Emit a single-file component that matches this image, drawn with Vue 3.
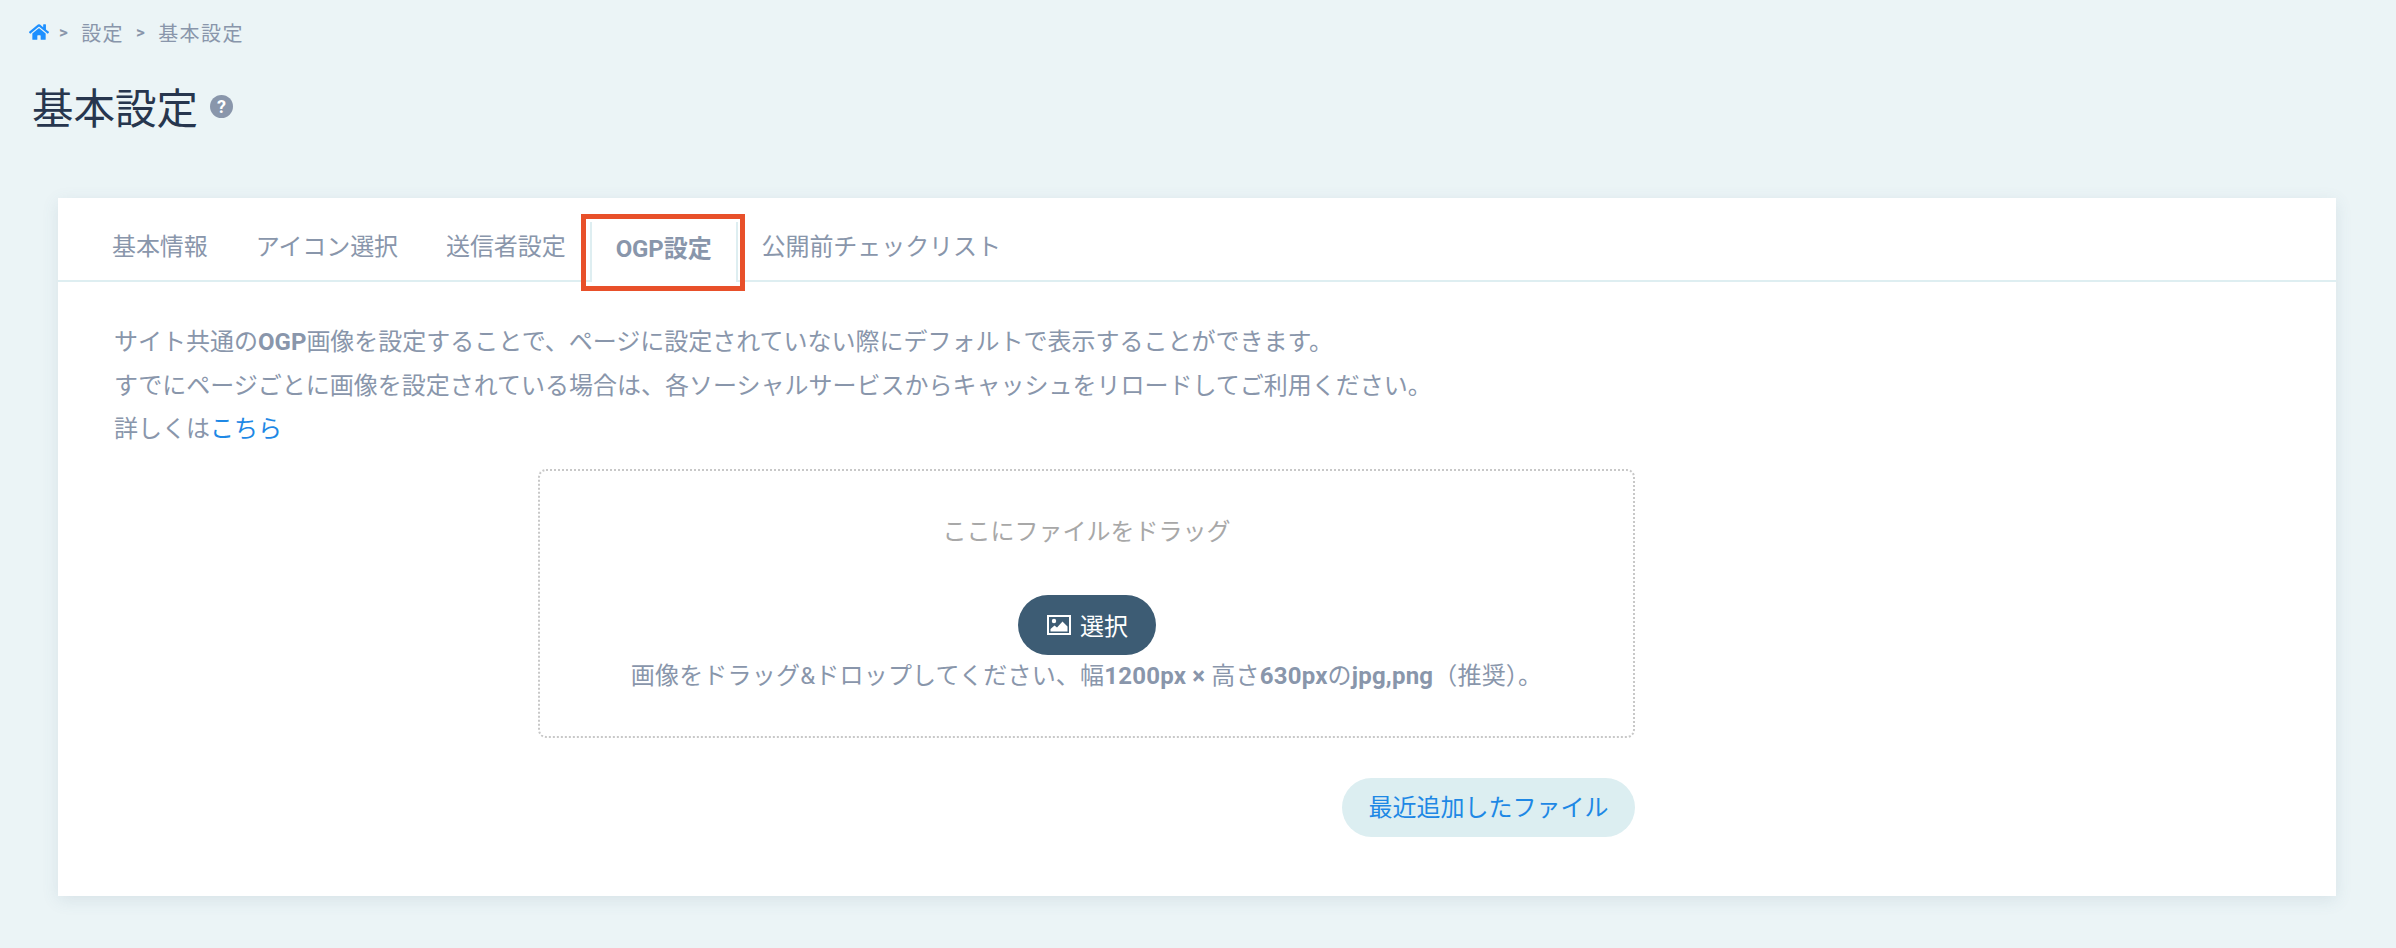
<template>
  <div class="page">
    <nav class="crumbs">
      <svg class="home" viewBox="0 0 576 512" width="20" height="18">
        <path fill="currentColor" d="M280.4 148.3L96 300.1V464a16 16 0 0 0 16 16l112-.3a16 16 0 0 0 15.9-16V368a16 16 0 0 1 16-16h64a16 16 0 0 1 16 16v95.6a16 16 0 0 0 16 16l112 .4a16 16 0 0 0 16-16V300L295.700 148.300a12.200 12.200 0 0 0-15.300 0zM571.600 251.500L488 182.600V44.100a12 12 0 0 0-12-12h-56a12 12 0 0 0-12 12v72.600L318.500 43a48 48 0 0 0-61 0L4.300 251.500a12 12 0 0 0-1.600 16.900l25.500 31a12 12 0 0 0 16.900 1.600l235.200-193.700a12.200 12.200 0 0 1 15.300 0L530.900 301a12 12 0 0 0 16.900-1.600l25.500-31a12 12 0 0 0-1.700-16.900z"/>
      </svg>
      <span class="sep">&gt;</span>
      <span class="crumb">設定</span>
      <span class="sep">&gt;</span>
      <span class="crumb">基本設定</span>
    </nav>

    <header class="head">
      <h1>基本設定</h1>
      <span class="help">?</span>
    </header>

    <section class="card">
      <ul class="tabs">
        <li v-for="tab in tabs" :key="tab" class="tab" :class="{ active: tab === activeTab }">{{ tab }}</li>
      </ul>
      <span class="marker"></span>

      <div class="body">
        <p class="lead">
          サイト共通の<b>OGP</b>画像を設定することで、ページに設定されていない際にデフォルトで表示することができます。<br>
          すでにページごとに画像を設定されている場合は、各ソーシャルサービスからキャッシュをリロードしてご利用ください。<br>
          詳しくは<a class="link">こちら</a>
        </p>

        <div class="upload">
          <div class="drop">
            <p class="drop-title">ここにファイルをドラッグ</p>
            <button class="pick">
              <svg viewBox="0 0 24 20" width="24" height="20">
                <rect x="1" y="1" width="22" height="18" fill="none" stroke="currentColor" stroke-width="2"/>
                <circle cx="7" cy="6" r="2.200" fill="currentColor"/>
                <path fill="currentColor" d="M3.500 16.500v-2.500l4-3.500 2.500 2 5.500-6 5 5v5z"/>
              </svg>
              <span>選択</span>
            </button>
            <p class="drop-note">画像をドラッグ&amp;ドロップしてください、幅<b>1200px × </b>高さ<b>630px</b>の<b>jpg,png</b>（推奨）。</p>
          </div>
          <div class="actions">
            <button class="recent">最近追加したファイル</button>
          </div>
        </div>
      </div>
    </section>
  </div>
</template>

<script setup>
const tabs = ['基本情報', 'アイコン選択', '送信者設定', 'OGP設定', '公開前チェックリスト']
const activeTab = 'OGP設定'
</script>

<style>
html, body {
  margin: 0;
  background: #ebf4f6;
}
</style>

<style scoped>
.page {
  height: 948px;
  box-sizing: border-box;
  padding: 20px 60px 0 0;
  background: #ebf4f6;
  font-family: Roboto, "Noto Sans CJK JP", sans-serif;
  color: #8996ab;
  overflow: hidden;
}
.crumbs {
  display: flex;
  align-items: center;
  height: 24px;
  padding-left: 29px;
  font-size: 20px;
  letter-spacing: 1.400px;
}
.home {
  color: #1e90ff;
  margin-right: 10px;
}
.sep {
  font-weight: 700;
  font-size: 17px;
  margin-right: 12px;
}
.crumb:nth-of-type(2) {
  margin-right: 12px;
}
.head {
  display: flex;
  align-items: center;
  gap: 12px;
  margin-top: 34px;
  padding-left: 32px;
  height: 56px;
}
h1 {
  margin: 0;
  font-size: 41.500px;
  font-weight: 400;
  color: #27364e;
}
.help {
  width: 23px;
  height: 23px;
  border-radius: 50%;
  background: #8996ab;
  color: #fff;
  font: 700 18px/23px Roboto, sans-serif;
  text-align: center;
}
.card {
  position: relative;
  margin: 64px 0 0 58px;
  height: 698px;
  background: #fff;
  box-shadow: 0 4px 16px rgba(70, 110, 130, 0.12);
}
.tabs {
  display: flex;
  height: 82px;
  margin: 0;
  padding: 0 0 0 30px;
  list-style: none;
  border-bottom: 2px solid #deeef1;
}
.tab {
  padding: 31px 24px 0;
  font-size: 24px;
  line-height: 36px;
  letter-spacing: -0.080px;
}
.active {
  height: 60px;
  box-sizing: border-box;
  margin: 24px 0 0 0;
  padding-top: 9px;
  background: #fff;
  font-weight: 700;
  border-left: 2px solid #deeef1;
  border-right: 2px solid #deeef1;
}
.marker {
  position: absolute;
  left: 523px;
  top: 16px;
  width: 164px;
  height: 77px;
  box-sizing: border-box;
  border: 5px solid #e8502a;
}
.body {
  padding: 39px 56px 0;
}
.lead {
  margin: 0;
  font-size: 24px;
  line-height: 43.500px;
}
.link {
  color: #1e88e5;
}
.upload {
  width: 1097px;
  margin: 17px 0 0 424px;
}
.drop {
  display: flex;
  flex-direction: column;
  align-items: center;
  height: 269px;
  box-sizing: border-box;
  border: 2px dotted #c8c8c8;
  border-radius: 8px;
}
.drop-title {
  margin: 43px 0 0;
  font-size: 24px;
  line-height: 36px;
  color: #a8a8a8;
}
.pick {
  display: flex;
  align-items: center;
  justify-content: center;
  gap: 9px;
  width: 138px;
  height: 60px;
  margin-top: 45px;
  padding: 0 0 0 2px;
  border: 0;
  border-radius: 30px;
  background: #3d5c74;
  color: #fff;
  font: 24px Roboto, "Noto Sans CJK JP", sans-serif;
}
.drop-note {
  margin: 3px 0 0;
  font-size: 24px;
  line-height: 36px;
  letter-spacing: 0.200px;
}
.actions {
  display: flex;
  justify-content: flex-end;
  margin-top: 40px;
}
.recent {
  width: 293px;
  height: 59px;
  padding: 0 0 4px;
  border: 0;
  border-radius: 30px;
  background: #dceef1;
  color: #1e88e5;
  font: 24px Roboto, "Noto Sans CJK JP", sans-serif;
}
</style>
